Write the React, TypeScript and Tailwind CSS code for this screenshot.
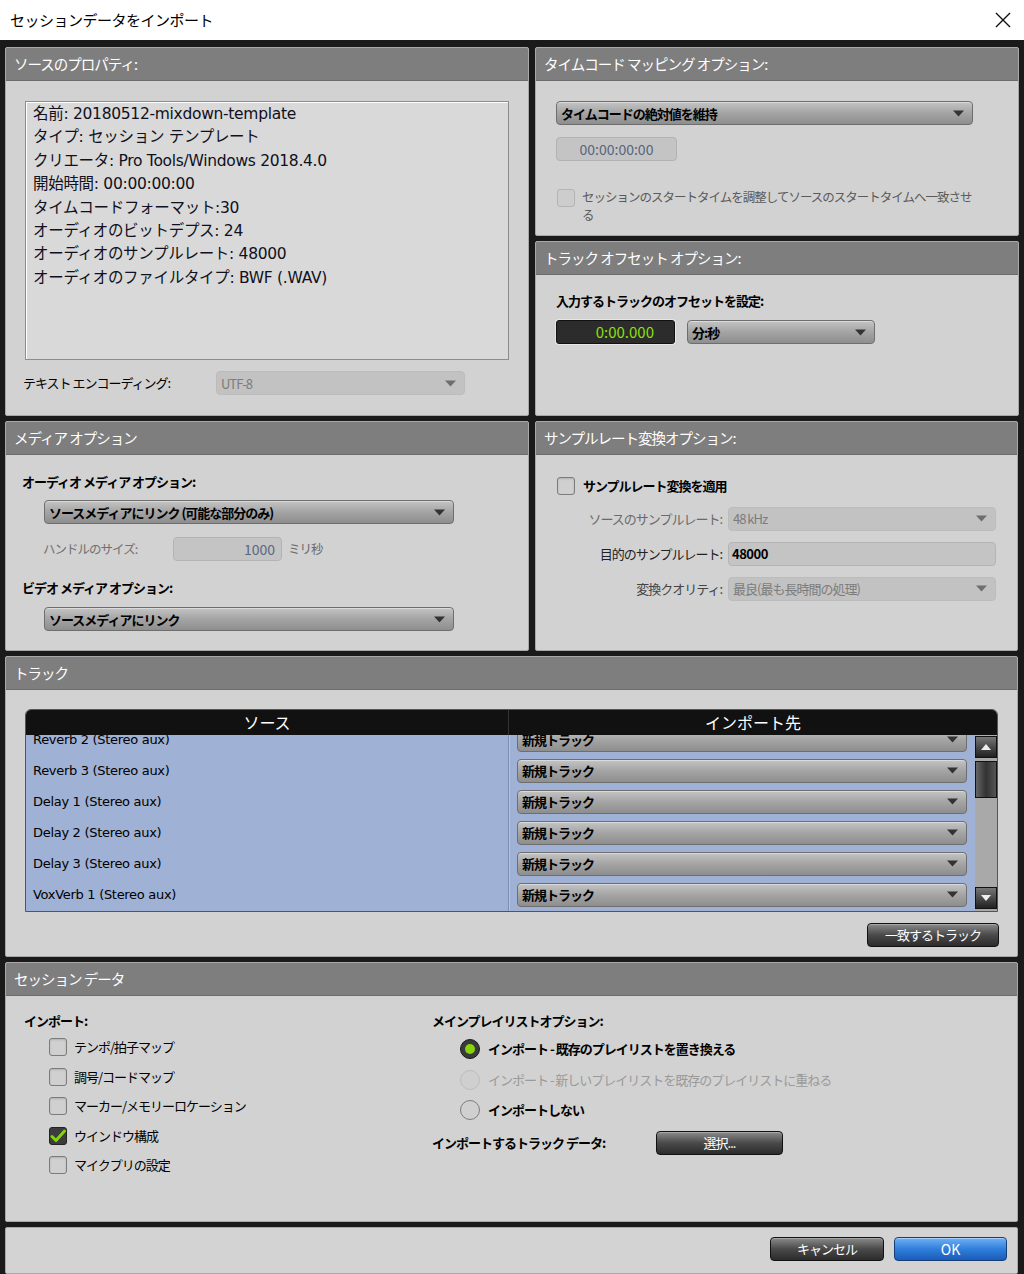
import React from "react";

const Tri = ({ color = "#3a3a3a" }: { color?: string }) => (
  <svg width="11" height="7" viewBox="0 0 11 7" className="shrink-0">
    <path d="M0 0.5h11L5.5 6.5z" fill={color} />
  </svg>
);

const Panel = ({
  title,
  className = "",
  children,
}: {
  title: string;
  className?: string;
  children?: React.ReactNode;
}) => (
  <div
    className={`flex flex-col bg-[#d2d2d2] border border-[#a8a8a8] rounded-[2px] overflow-hidden ${className}`}
  >
    <div className="h-[33px] shrink-0 bg-[#7e7e7e] border-b border-[#6c6c6c] pl-[8px] flex items-center text-white text-[14.5px] tracking-[-1px]">
      {title}
    </div>
    <div className="flex-1 relative">{children}</div>
  </div>
);

const Select = ({
  text,
  className = "",
  disabled = false,
}: {
  text: string;
  className?: string;
  disabled?: boolean;
}) => (
  <div
    className={`h-[24px] rounded-[4px] border flex items-center justify-between pl-[4px] pr-[8px] ${
      disabled
        ? "border-[#bcbcbc] bg-[#c2c2c2] text-[#7c7c7c]"
        : "border-[#6e6e6e] bg-linear-to-b from-[#c4c4c4] via-[#a4a4a4] to-[#8e8e8e] text-black shadow-[inset_0_1px_0_#dadada]"
    } ${className}`}
  >
    <span
      className={`text-[13px] leading-none tracking-[-1px] ${
        disabled ? "" : "font-bold"
      }`}
    >
      {text}
    </span>
    <Tri color={disabled ? "#6e6e6e" : "#333"} />
  </div>
);

const Check = ({
  checked = false,
  disabled = false,
}: {
  checked?: boolean;
  disabled?: boolean;
}) => (
  <div
    className={`w-[18px] h-[18px] rounded-[3px] border flex items-center justify-center shrink-0 ${
      checked
        ? "border-[#222] bg-[#3c3c3c]"
        : disabled
        ? "border-[#b4b4b4] bg-[#cdcdcd]"
        : "border-[#7c7c7c] bg-[#d0d0d0] shadow-[inset_0_1px_2px_rgba(0,0,0,0.15)]"
    }`}
  >
    {checked && (
      <svg width="16" height="14" viewBox="0 0 16 14">
        <path
          d="M2 7.5l4 4L14.5 2"
          fill="none"
          stroke="#7fd40a"
          strokeWidth="3"
          strokeLinecap="round"
          strokeLinejoin="round"
        />
      </svg>
    )}
  </div>
);

const Radio = ({
  selected = false,
  disabled = false,
}: {
  selected?: boolean;
  disabled?: boolean;
}) => (
  <div
    className={`w-[20px] h-[20px] rounded-full border flex items-center justify-center shrink-0 ${
      selected
        ? "border-[#1a1a1a] bg-[#3a3a3a]"
        : disabled
        ? "border-[#bdbdbd] bg-[#cfcfcf]"
        : "border-[#7e7e7e] bg-[#d0d0d0]"
    }`}
  >
    {selected && <div className="w-[10px] h-[10px] rounded-full bg-[#86d40c]" />}
  </div>
);

const DarkButton = ({ text, className = "" }: { text: string; className?: string }) => (
  <div
    className={`h-[24px] rounded-[4px] border border-[#111] bg-linear-to-b from-[#8c8c8c] via-[#4a4a4a] to-[#2c2c2c] shadow-[inset_0_1px_0_#a8a8a8] flex items-center justify-center text-white text-[13px] tracking-[-1px] ${className}`}
  >
    {text}
  </div>
);

const tracks = [
  "Reverb 2 (Stereo aux)",
  "Reverb 3 (Stereo aux)",
  "Delay 1 (Stereo aux)",
  "Delay 2 (Stereo aux)",
  "Delay 3 (Stereo aux)",
  "VoxVerb 1 (Stereo aux)",
];

const info = [
  "名前: 20180512-mixdown-template",
  "タイプ: セッション テンプレート",
  "クリエータ: Pro Tools/Windows 2018.4.0",
  "開始時間: 00:00:00:00",
  "タイムコードフォーマット:30",
  "オーディオのビットデプス: 24",
  "オーディオのサンプルレート: 48000",
  "オーディオのファイルタイプ: BWF (.WAV)",
];

export default function App() {
  return (
    <div className="w-[1024px] h-[1274px] flex flex-col bg-[#1a1a1a] font-['Noto_Sans_CJK_JP',sans-serif] overflow-hidden">
      {/* title bar */}
      <div className="h-[40px] shrink-0 bg-white flex items-center justify-between pl-[10px] pr-[13px]">
        <span className="text-[15px] text-black tracking-[-0.5px]">セッションデータをインポート</span>
        <svg width="16" height="16" viewBox="0 0 16 16">
          <path d="M1 1L15 15M15 1L1 15" stroke="#111" strokeWidth="1.4" />
        </svg>
      </div>

      <div className="flex-1 flex flex-col pl-[5px] pr-[6px] pt-[7px] gap-[5px] min-h-0">
        {/* row 1 */}
        <div className="flex gap-[6px] h-[369px] shrink-0">
          <Panel title="ソースのプロパティ:" className="w-[524px] shrink-0">
            <div className="pt-[20px] pl-[19px] pr-[19px]">
              <div className="h-[259px] bg-[#d9d9d9] border border-[#8c8c8c] shadow-[inset_1px_1px_0_#fff] pt-[1px] px-[7px]">
                {info.map((l) => (
                  <div
                    key={l}
                    className="font-['DejaVu_Sans','Noto_Sans_CJK_JP',sans-serif] text-[15.5px] leading-[23.4px] text-[#101020] tracking-[-0.3px] whitespace-nowrap"
                  >
                    {l}
                  </div>
                ))}
              </div>
              <div className="flex items-center mt-[11px]">
                <span className="w-[193px] -ml-[2px] text-[13px] text-black tracking-[-1px]">
                  テキスト エンコーディング:
                </span>
                <Select text="UTF-8" disabled className="w-[249px]" />
              </div>
            </div>
          </Panel>
          <div className="flex-1 flex flex-col gap-[5px]">
            <Panel title="タイムコード マッピング オプション:" className="h-[189px] shrink-0">
              <div className="pt-[20px] pl-[20px] pr-[44px]">
                <Select text="タイムコードの絶対値を維持" className="w-[417px]" />
                <div className="mt-[12px] w-[121px] h-[24px] rounded-[4px] border border-[#b2b2b2] bg-[#c4c4c4] flex items-center justify-center text-[14px] text-[#56657e]">
                  00:00:00:00
                </div>
                <div className="mt-[27px] flex items-start gap-[7px] pl-[1px]">
                  <div className="mt-[1px]">
                    <Check disabled />
                  </div>
                  <span className="text-[12.5px] leading-[18px] text-[#5a5a5a] tracking-[-1px] w-[392px]">
                    セッションのスタートタイムを調整してソースのスタートタイムへ一致させる
                  </span>
                </div>
              </div>
            </Panel>
            <Panel title="トラック オフセット オプション:" className="flex-1">
              <div className="pt-[17px] pl-[20px]">
                <div className="text-[13px] leading-[18px] font-bold text-black tracking-[-1px]">
                  入力するトラックのオフセットを設定:
                </div>
                <div className="mt-[10px] flex gap-[12px]">
                  <div className="w-[119px] h-[24px] rounded-[3px] border border-[#111] bg-[#2c2c2c] shadow-[0_0_0_1px_#e6e6e6] flex items-center justify-end pr-[20px] text-[15px] text-[#8ee00a]">
                    0:00.000
                  </div>
                  <Select text="分:秒" className="w-[188px]" />
                </div>
              </div>
            </Panel>
          </div>
        </div>

        {/* row 2 */}
        <div className="flex gap-[6px] h-[230px] shrink-0">
          <Panel title="メディア オプション" className="w-[524px] shrink-0">
            <div className="pt-[18px] pl-[16px]">
              <div className="text-[13px] leading-[18px] font-bold text-black tracking-[-1px]">
                オーディオ メディア オプション:
              </div>
              <Select text="ソースメディアにリンク (可能な部分のみ)" className="w-[410px] ml-[22px] mt-[9px]" />
              <div className="mt-[13px] flex items-center ml-[21px]">
                <span className="w-[130px] text-[12.5px] text-[#707070] tracking-[-1px]">ハンドルのサイズ:</span>
                <div className="w-[109px] h-[24px] rounded-[4px] border border-[#b4b4b4] bg-[#c4c4c4] flex items-center justify-end pr-[6px] text-[14px] text-[#5a6782]">
                  1000
                </div>
                <span className="ml-[6px] text-[12.5px] text-[#6a6a6a] tracking-[-1px]">ミリ秒</span>
              </div>
              <div className="mt-[18px] text-[13px] leading-[18px] font-bold text-black tracking-[-1px]">
                ビデオ メディア オプション:
              </div>
              <Select text="ソースメディアにリンク" className="w-[410px] ml-[22px] mt-[10px]" />
            </div>
          </Panel>
          <Panel title="サンプルレート変換オプション:" className="flex-1">
            <div className="pt-[21px] pl-[21px]">
              <div className="flex items-center gap-[8px]">
                <Check />
                <span className="text-[13px] font-bold text-black tracking-[-1px]">サンプルレート変換を適用</span>
              </div>
              <div className="mt-[11px] -ml-[21px] grid grid-cols-[186px_268px] gap-x-[6px] gap-y-[11px] items-center">
                <span className="text-right text-[13px] text-[#6a6a6a] tracking-[-1px]">ソースのサンプルレート:</span>
                <Select text="48 kHz" disabled />
                <span className="text-right text-[13px] text-[#222] tracking-[-1px]">目的のサンプルレート:</span>
                <div className="h-[24px] rounded-[4px] border border-[#b4b4b4] bg-[#c4c4c4] flex items-center pl-[3px] text-[13px] font-bold text-black tracking-[-0.5px]">
                  48000
                </div>
                <span className="text-right text-[13px] text-[#444] tracking-[-1px]">変換クオリティ:</span>
                <Select text="最良(最も長時間の処理)" disabled />
              </div>
            </div>
          </Panel>
        </div>

        {/* tracks */}
        <Panel title="トラック" className="h-[301px] shrink-0">
          <div className="pt-[19px] pl-[19px]">
            <div className="w-[973px] border border-[#555] rounded-t-[6px] overflow-hidden">
              <div className="h-[25px] bg-[#111] flex text-white text-[16px] leading-[25px]">
                <div className="w-[483px] text-center border-r border-[#333]">ソース</div>
                <div className="flex-1 text-center">インポート先</div>
              </div>
              <div className="h-[176px] flex bg-[#9fb1d5] overflow-hidden">
                <div className="w-[483px] border-r border-[#7d8db0] flex flex-col -mt-[11px]">
                  {tracks.map((t) => (
                    <div
                      key={t}
                      className="h-[31px] shrink-0 flex items-center pl-[7px] font-['DejaVu_Sans',sans-serif] text-[13px] tracking-[-0.3px] text-black"
                    >
                      {t}
                    </div>
                  ))}
                </div>
                <div className="w-[466px] flex flex-col -mt-[11px] border-l border-[#b6c4e2]">
                  {tracks.map((t) => (
                    <div key={t} className="h-[31px] shrink-0 flex items-center pl-[7px]">
                      <Select text="新規トラック" className="w-[450px]" />
                    </div>
                  ))}
                </div>
                <div className="w-[22px] flex flex-col bg-[#a9a9a9] mt-[1px]">
                  <div className="h-[22px] bg-linear-to-b from-[#777] to-[#222] border border-[#111] flex items-center justify-center">
                    <svg width="10" height="6" viewBox="0 0 10 6">
                      <path d="M0 6h10L5 0z" fill="#eee" />
                    </svg>
                  </div>
                  <div className="mt-[3px] h-[37px] bg-linear-to-r from-[#666] via-[#333] to-[#555] border border-[#111]" />
                  <div className="flex-1" />
                  <div className="h-[22px] bg-linear-to-b from-[#777] to-[#222] border border-[#111] flex items-center justify-center mb-[2px]">
                    <svg width="10" height="6" viewBox="0 0 10 6">
                      <path d="M0 0h10L5 6z" fill="#eee" />
                    </svg>
                  </div>
                </div>
              </div>
            </div>
            <div className="flex justify-end pr-[18px] mt-[11px]">
              <DarkButton text="一致するトラック" className="w-[132px]" />
            </div>
          </div>
        </Panel>

        {/* session data */}
        <Panel title="セッション データ" className="h-[260px] shrink-0">
          <div className="pt-[16px] flex">
            <div className="w-[426px] pl-[18px]">
              <div className="text-[13px] leading-[18px] font-bold text-black tracking-[-1px]">インポート:</div>
              <div className="mt-[8px] pl-[25px] flex flex-col gap-[11.5px]">
                {[
                  ["テンポ/拍子マップ", false],
                  ["調号/コードマップ", false],
                  ["マーカー/メモリーロケーション", false],
                  ["ウインドウ構成", true],
                  ["マイクプリの設定", false],
                ].map(([l, c]) => (
                  <div key={l as string} className="h-[18px] flex items-center gap-[7px]">
                    <Check checked={c as boolean} />
                    <span className="text-[13px] text-black tracking-[-1px]">{l as string}</span>
                  </div>
                ))}
              </div>
            </div>
            <div>
              <div className="text-[13px] leading-[18px] font-bold text-black tracking-[-1px]">
                メインプレイリストオプション:
              </div>
              <div className="mt-[9px] pl-[28px] flex flex-col gap-[10.5px]">
                <div className="h-[20px] flex items-center gap-[8px]">
                  <Radio selected />
                  <span className="text-[13px] font-bold text-black tracking-[-1px]">
                    インポート - 既存のプレイリストを置き換える
                  </span>
                </div>
                <div className="h-[20px] flex items-center gap-[8px]">
                  <Radio disabled />
                  <span className="text-[13px] text-[#9a9a9a] tracking-[-1px]">
                    インポート - 新しいプレイリストを既存のプレイリストに重ねる
                  </span>
                </div>
                <div className="h-[20px] flex items-center gap-[8px]">
                  <Radio />
                  <span className="text-[13px] font-bold text-black tracking-[-1px]">インポートしない</span>
                </div>
              </div>
              <div className="mt-[11px] flex items-center">
                <span className="w-[224px] text-[13px] font-bold text-black tracking-[-1px]">
                  インポートするトラック データ:
                </span>
                <DarkButton text="選択..." className="w-[127px]" />
              </div>
            </div>
          </div>
        </Panel>

        {/* bottom bar */}
        <div className="flex-1 bg-[#d3d3d3] border border-[#a8a8a8] rounded-[2px] flex justify-end items-start gap-[10px] pt-[9px] pr-[10px]">
          <DarkButton text="キャンセル" className="w-[114px]" />
          <div className="w-[113px] h-[24px] rounded-[4px] border border-[#163d78] bg-linear-to-b from-[#6fb0f5] via-[#2f7fdc] to-[#1b5cb8] shadow-[inset_0_1px_0_#a8d0fa] flex items-center justify-center text-white text-[14px]">
            OK
          </div>
        </div>
      </div>
    </div>
  );
}
